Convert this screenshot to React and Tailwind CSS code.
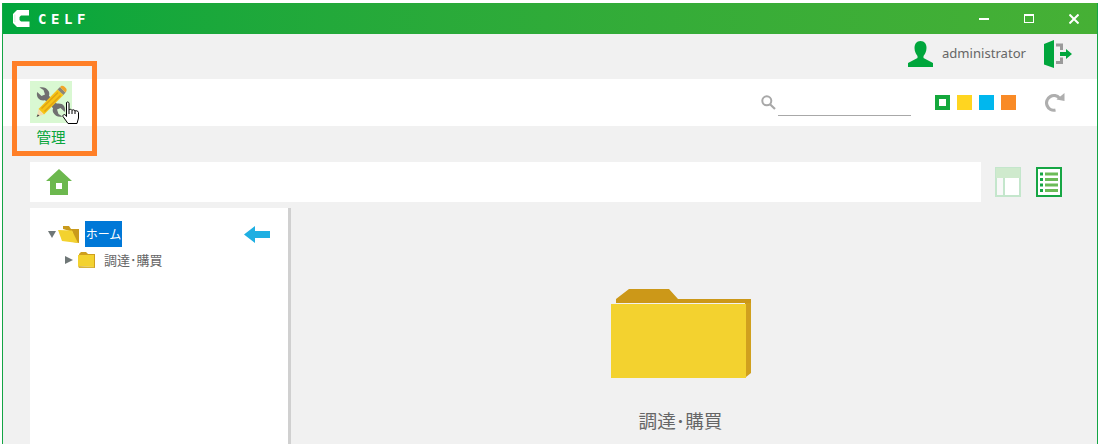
const jp = "font-['Noto_Sans_CJK_JP','Noto_Sans',sans-serif]";

function LogoMark() {
  return (
    <svg width="17" height="17" viewBox="0 0 17 17">
      <path d="M4 0H16V5.500H8L6.500 7V10L8 11.500H16.500V17H4L0 13V4Z" fill="#fff" />
      <path d="M1 4.500H2.500V12H1Z" fill="#e2f5e6" />
    </svg>
  );
}

function WrenchHead({ flip }) {
  return (
    <path
      d="M7.200 11L11.500 15L15 13.500L13.500 9L9.500 6.500C13.500 5.500 17 7 18.800 10.500C19.500 12 19.500 14 18.500 16L16 19C13 20 10 19.500 8 17C6.800 15 6.600 13 7.200 11Z"
      fill="#707070"
      transform={flip ? "rotate(180 21 21)" : undefined}
    />
  );
}

function ToolsIcon() {
  return (
    <svg width="42" height="42" viewBox="0 0 42 42">
      <WrenchHead />
      <WrenchHead flip />
      <path d="M16 16L26 26" stroke="#707070" strokeWidth="6" />
      <path d="M27.500 8.500L33.500 14L14 33.500L8.500 28Z" fill="#f6c417" />
      <path d="M11.500 27.500L28 11.500M14.500 30.500L30.500 14.500" stroke="#e0a312" strokeWidth="1.500" />
      <path d="M27.500 8.500L30 6L35.500 11.500L33.500 14Z" fill="#8b8578" />
      <path d="M30 6L31.500 4.800C32.500 4.500 33.500 4.800 34.500 5.800L36 7.300C36.800 8.300 36.800 9.500 36.200 10.500L35.500 11.500Z" fill="#f2a52a" />
      <path d="M8.500 28L14 33.500L7 35.500Z" fill="#f3ddb0" />
      <path d="M7.800 33.200L9.500 34.800L6.500 36Z" fill="#444" />
    </svg>
  );
}

function HandCursor() {
  return (
    <svg width="18" height="24" viewBox="0 0 18 24" className="absolute left-[32px] top-[20px]">
      <path
        d="M4.500 1.500C5.500.5 7 1 7 2.500V9C7.500 8 9.500 8 10 9.500C10.500 8.500 12.500 8.500 13 10C13.500 9.500 16 9.500 16.500 11.500V17L15 22.500H6L1 15.500C.5 14 2 13 3.500 14L4.500 15.500Z"
        fill="#fff"
        stroke="#000"
        strokeWidth="1"
      />
      <path d="M7 9V13M10 9.500V13M13 10V13" stroke="#000" strokeWidth="1" fill="none" />
    </svg>
  );
}

function UserIcon() {
  return (
    <svg width="25" height="26" viewBox="0 0 25 26">
      <path d="M12.500 0C16.500 0 18.500 3 18.500 7C18.500 11 16.500 13.500 15.500 15V17L25 22V26H0V22L9.500 17V15C8.500 13.500 6.500 11 6.500 7C6.500 3 8.500 0 12.500 0Z" fill="#00a63c" />
    </svg>
  );
}

function LogoutIcon() {
  return (
    <svg width="28" height="28" viewBox="0 0 28 28">
      <path d="M0 4L10 0V28L0 24.500Z" fill="#00a63c" />
      <path d="M12 3.500H19V10H16V6.500H12ZM16 17.500H19V24H12V21H16Z" fill="#9a9a9a" />
      <path d="M16 12H22V9L28 14L22 19V16H16Z" fill="#00a63c" />
    </svg>
  );
}

function SearchIcon() {
  return (
    <svg width="15" height="15" viewBox="0 0 15 15">
      <circle cx="5.800" cy="5.800" r="4.500" fill="none" stroke="#a8a8a8" strokeWidth="2" />
      <path d="M9 9.200L14 14" stroke="#a8a8a8" strokeWidth="2.200" />
    </svg>
  );
}

function ReloadIcon() {
  return (
    <svg width="20" height="19" viewBox="0 0 20 19">
      <path d="M14.500 5.200A7.300 7.300 0 1 0 10.500 17" fill="none" stroke="#aeaeae" strokeWidth="3.200" />
      <path d="M11.500 6.500L19.500 0V8Z" fill="#aeaeae" />
    </svg>
  );
}

function HomeIcon() {
  return (
    <svg width="26" height="26" viewBox="0 0 26 26">
      <path d="M13 0L26 12H22V26H4V12H0Z" fill="#6cb84e" />
      <rect x="10" y="14" width="6" height="6" fill="#fff" />
    </svg>
  );
}

function TableViewIcon() {
  return (
    <svg width="26" height="30" viewBox="0 0 26 30">
      <rect x="1" y="1" width="24" height="28" fill="#fff" stroke="#c4e6cc" strokeWidth="2" />
      <rect x="1" y="1" width="24" height="10" fill="#cfeacd" />
      <rect x="2" y="11" width="6" height="17" fill="#f8f8f8" />
      <rect x="8" y="11" width="2" height="18" fill="#c4e6cc" />
    </svg>
  );
}

function ListViewIcon() {
  return (
    <svg width="26" height="30" viewBox="0 0 26 30">
      <rect x="1" y="1" width="24" height="28" fill="#fff" stroke="#16a644" strokeWidth="2" />
      {[7, 12.500, 18, 23.500].map((y) => (
        <g key={y}>
          <rect x="4" y={y - 1.5} width="3" height="3" fill="#16a644" />
          <rect x="9" y={y - 1.5} width="13" height="3" fill="#6cbb57" />
        </g>
      ))}
    </svg>
  );
}

function Triangle({ open }) {
  return open ? (
    <svg width="8" height="7" viewBox="0 0 8 7"><path d="M0 0H8L4 7Z" fill="#6f7777" /></svg>
  ) : (
    <svg width="8" height="8" viewBox="0 0 8 8"><path d="M0 0L8 4L0 8Z" fill="#6f7777" /></svg>
  );
}

function OpenFolderIcon() {
  return (
    <svg width="21" height="17" viewBox="0 0 21 17">
      <path d="M5 0H11L13 3H21V17L15 16V6L5 3Z" fill="#c99a1c" />
      <path d="M0 4L14 4.500L20 17L4 15Z" fill="#f3d22f" />
    </svg>
  );
}

function SmallFolderIcon() {
  return (
    <svg width="17" height="16" viewBox="0 0 17 16">
      <path d="M1 2L3 0H8L10 2H17V16H16V3H1Z" fill="#cf9f1d" />
      <path d="M0 3H16V15L0 14Z" fill="#f3d22f" />
      <path d="M0 14L16 15L17 16H1Z" fill="#d8b33a" />
    </svg>
  );
}

function BigFolderIcon() {
  return (
    <svg width="140" height="90" viewBox="0 0 140 90">
      <path d="M5 15V11L18 1H58L67 11H140V85H134V15Z" fill="#cc9818" />
      <path d="M135 15H140V85L135 89Z" fill="#d0a01e" />
      <rect x="0" y="16" width="135" height="74" fill="#f3d22f" />
    </svg>
  );
}

function Swatch({ className, children }) {
  return <div className={`w-[15px] h-[15px] flex items-center justify-center ${className}`}>{children}</div>;
}

export default function App() {
  return (
    <div className={`h-[444px] overflow-hidden bg-white pt-[3px] pl-[2px] pr-[2px] ${jp}`}>
      <div className="h-[441px] flex flex-col bg-[#f1f1f1] border-x border-x-[#14a545]">
        <header className="h-[31px] shrink-0 flex items-center justify-between bg-gradient-to-r from-[#00a63c] to-[#46b035]">
          <div className="flex items-center ml-[10px]">
            <LogoMark />
            <span className="ml-[8px] text-[14px] leading-none font-bold tracking-[4.6px] text-white font-['DejaVu_Sans_Mono',monospace]">CELF</span>
          </div>
          <div className="flex items-center mr-[18px] gap-[35px]">
            <div className="w-[10px] h-[2px] bg-white" />
            <div className="w-[10px] h-[9px] border border-white border-t-2" />
            <svg width="10" height="10" viewBox="0 0 10 10"><path d="M.5.5L9.500 9.500M9.500.5L.5 9.500" stroke="#fff" strokeWidth="2" /></svg>
          </div>
        </header>

        <div className="h-[45px] shrink-0 flex items-center justify-end pr-[25px] pb-[5px]">
          <UserIcon />
          <span className="ml-[9px] text-[13.1px] text-[#666] font-['Noto_Sans',sans-serif]">administrator</span>
          <div className="ml-[18px]"><LogoutIcon /></div>
        </div>

        <div className="relative h-[47px] shrink-0 flex items-center justify-end bg-white pr-[32px]">
          <div className="absolute left-[27px] top-[2px] w-[42px] h-[42px] bg-[#d9f8d2]">
            <ToolsIcon />
            <HandCursor />
            <div className="absolute left-0 right-0 top-[45px] text-center text-[14.6px] leading-[22px] text-[#0aa63c]">管理</div>
          </div>
          <div className="absolute left-[9px] top-[-18px] w-[85px] h-[95px] border-[5px] border-[#ff7f27]" />
          <SearchIcon />
          <div className="ml-[2px] mt-[25px] w-[133px] h-[1px] bg-[#a8a8a8]" />
          <div className="flex gap-[7px] ml-[24px] mr-[29px]">
            <Swatch className="bg-[#14a83c]"><div className="w-[7px] h-[7px] bg-white" /></Swatch>
            <Swatch className="bg-[#ffd520]" />
            <Swatch className="bg-[#00b7ee]" />
            <Swatch className="bg-[#f98a26]" />
          </div>
          <ReloadIcon />
        </div>

        <div className="flex-1 min-h-0 flex flex-col pl-[27px] pt-[36px]">
          <div className="h-[40px] shrink-0 flex items-center">
            <div className="w-[951px] h-[40px] flex items-center bg-white pl-[16px]">
              <HomeIcon />
            </div>
            <div className="flex gap-[15px] ml-[14px]">
              <TableViewIcon />
              <ListViewIcon />
            </div>
          </div>

          <div className="flex-1 min-h-0 flex mt-[6px]">
            <div className="w-[261px] shrink-0 bg-white border-r-[3px] border-r-[#d0d0d0] pt-[13px]">
              <div className="h-[26px] flex items-center pl-[18px]">
                <Triangle open />
                <div className="ml-[2px]"><OpenFolderIcon /></div>
                <span className="ml-[6px] h-[26px] w-[37px] flex items-center justify-center bg-[#0078d7] text-white text-[12px]">ホーム</span>
                <svg width="26" height="17" viewBox="0 0 26 17" className="ml-[122px]">
                  <path d="M0 8.500L11 0V5H26V12H11V17Z" fill="#1fafe2" />
                </svg>
              </div>
              <div className="h-[26px] flex items-center pl-[35px]">
                <Triangle />
                <div className="ml-[5px]"><SmallFolderIcon /></div>
                <span className="ml-[9px] text-[13px] text-[#666]">調達･購買</span>
              </div>
            </div>

            <div className="flex-1 flex flex-col items-center pt-[80px] pr-[27px]">
              <BigFolderIcon />
              <div className="mt-[28px] text-[18.67px] leading-[28px] text-[#666]">調達･購買</div>
            </div>
          </div>
        </div>
      </div>
    </div>
  );
}
